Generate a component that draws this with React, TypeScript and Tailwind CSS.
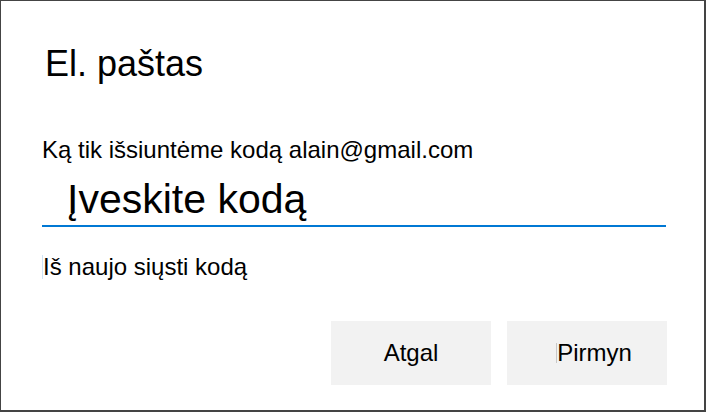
export default function App() {
  return (
    <div className="w-[706px] h-[412px] bg-white text-black border-[#444] border-t border-l border-r-2 border-b-2 font-['Liberation_Sans',Arial,sans-serif] flex flex-col">
      <h1 className="ml-[44px] mt-[45px] text-[36px] leading-none font-normal">El. paštas</h1>

      <p className="ml-[41px] mt-[56px] text-[24px] leading-none">
        Ką tik išsiuntėme kodą alain@gmail.com
      </p>

      <input
        className="ml-[41px] mt-[17px] w-[624px] h-[48px] pb-[5px] pl-[25px] text-[41px] leading-none border-b-2 border-[#0078d4] outline-none placeholder:text-black"
        placeholder="Įveskite kodą"
      />

      <a className="ml-[41px] mt-[28px] text-[24px] leading-none border-l border-[#cfe3f5] w-fit">
        Iš naujo siųsti kodą
      </a>

      <div className="mt-[42px] flex justify-end gap-4 pr-[37px]">
        <button className="w-[160px] h-[64px] bg-[#f2f2f2] text-[24px] leading-none">Atgal</button>
        <button className="w-[160px] h-[64px] bg-[#f2f2f2] text-[24px] leading-none flex items-center justify-center pl-[14px]">
          <span className="w-px h-[20px] bg-[#c8c8c8]" />
          Pirmyn
        </button>
      </div>
    </div>
  )
}
